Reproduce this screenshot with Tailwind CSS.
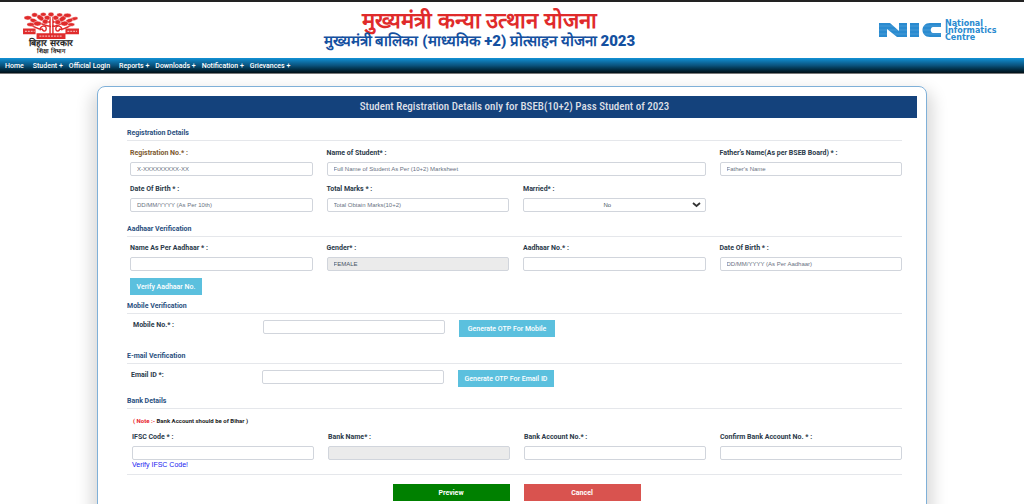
<!DOCTYPE html>
<html lang="en">
<head>
  <meta charset="UTF-8" />
  <meta name="viewport" content="width=device-width, initial-scale=1.0" />
  <title>Student Registration</title>
  <script src="https://cdn.jsdelivr.net/npm/@tailwindcss/browser@4"></script>
</head>
<body class="h-screen overflow-hidden bg-white font-['Roboto','Liberation_Sans',sans-serif] text-[7px] leading-[10px] text-[#2b3a4a]">

  <!-- Header -->
  <header class="flex h-[58px] items-start border-t-2 border-[#222] px-[22px]">
    <div class="flex w-[58px] flex-col items-center pt-[10px]">
      <svg class="h-[27px] w-[58px]" viewBox="0 0 58 28" fill="none" stroke="#e02b2b">
        <!-- branches -->
        <path stroke-width="1.500" d="M28 23V5M31 23V5M29 15C22 15 18 10 8 9M30 15C38 15 42 10 52 7M28 11C22 9 18 5 13 3M31 11C37 9 40 5 46 4M20 18c-6 0-9-4-14-5M38 18c6 0 9-3 13-5" />
        <!-- leaves -->
        <g fill="#e02b2b" stroke="#fff" stroke-width=".4">
          <ellipse cx="5" cy="6" rx="4" ry="2.200" /><ellipse cx="11" cy="9" rx="4" ry="2.200" transform="rotate(20 11 9)" />
          <ellipse cx="12" cy="3" rx="3" ry="2.200" /><ellipse cx="18" cy="6" rx="4" ry="2.500" transform="rotate(35 18 6)" />
          <ellipse cx="21" cy="2.500" rx="3" ry="2" /><ellipse cx="25" cy="6" rx="3" ry="2.500" />
          <ellipse cx="29" cy="2.500" rx="3" ry="2.300" /><ellipse cx="34" cy="6" rx="3" ry="2.500" />
          <ellipse cx="38" cy="3" rx="3" ry="2" /><ellipse cx="41" cy="7" rx="4" ry="2.500" transform="rotate(-35 41 7)" />
          <ellipse cx="46" cy="3.500" rx="4" ry="2.200" /><ellipse cx="53" cy="7" rx="4" ry="1.800" transform="rotate(-10 53 7)" />
          <ellipse cx="48" cy="9" rx="4" ry="2.200" transform="rotate(-20 48 9)" /><ellipse cx="8" cy="13" rx="4" ry="2" />
          <ellipse cx="15" cy="12" rx="4" ry="2.500" /><ellipse cx="23" cy="10" rx="3" ry="2.500" />
          <ellipse cx="36" cy="10.500" rx="3" ry="2.500" /><ellipse cx="43" cy="12" rx="4" ry="2.500" />
          <ellipse cx="50" cy="13" rx="3.500" ry="1.800" />
        </g>
        <path stroke-width="1.500" d="M18 19c-1-5 6-6 6-2s-4 3-4 0M40 19c1-5-6-6-6-2s4 3 4 0" />
        <!-- plinth and side panels -->
        <path fill="#e02b2b" stroke="none" d="M0 17h13v6H0zM44 17h14v6H44zM14 22h30v6H14z" />
        <path stroke="#fff" stroke-width=".8" stroke-dasharray="2 1" d="M2 20h10M46 20h10M17 25h24" />
      </svg>
      <p class="text-[9px] leading-[9px] font-semibold whitespace-nowrap text-[#222]">बिहार सरकार</p>
      <p class="text-[6px] leading-[6px] font-semibold whitespace-nowrap text-[#222]">शिक्षा विभाग</p>
    </div>
    <div class="flex-1 pt-[7px] text-center font-black">
      <h1 class="text-[22px] leading-[24px] text-[#e02b2b]">मुख्यमंत्री कन्या उत्थान योजना</h1>
      <h2 class="text-[15px] leading-[16px] text-[#1450a0]">मुख्यमंत्री बालिका (माध्यमिक +2) प्रोत्साहन योजना 2023</h2>
    </div>
    <div class="flex gap-1 pt-[18px] text-[#2a8bd0]">
      <svg class="mt-[2px] h-[15px] w-[62px]" viewBox="0 0 62 15">
        <path fill="#2a8bd0" d="M0 15V1h11l9 8V1h8v14H18L8 7v8zM31 1h9v14h-9zM62 1v4H54c-3 0-3 6 0 6h8v4H51c-10 0-10-14 0-14z" />
        <path stroke="#fff" stroke-opacity=".3" stroke-width=".5" d="M0 4h62M0 8h62M0 12h62" />
      </svg>
      <p class="w-[57px] font-['DejaVu_Sans',sans-serif] text-[8px] leading-[7px] font-bold">National<br />Informatics<br />Centre</p>
    </div>
  </header>

  <!-- Menu -->
  <nav class="flex h-4 items-center border-b border-[#777] bg-linear-to-b from-[#1191d6] via-[#0a527c] to-[#001018] pl-[5px] text-[7px] font-medium whitespace-nowrap text-white">
    <a href="#" class="mr-[9px]">Home</a>
    <a href="#" class="mr-[6px]">Student +</a>
    <a href="#" class="mr-[9px]">Official Login</a>
    <a href="#" class="mr-[6px]">Reports +</a>
    <a href="#" class="mr-[6px]">Downloads +</a>
    <a href="#" class="mr-[6px]">Notification +</a>
    <a href="#">Grievances +</a>
  </nav>

  <!-- Form -->
  <main class="mx-[97px] mt-3 rounded-lg border border-[#7fb0d8] pt-[9px] pr-[9px] pb-8 pl-[14px] shadow-[0_10px_16px_6px_rgba(0,0,0,0.15)]">
    <h2 class="h-[22px] bg-[#14427c] text-center font-['Liberation_Sans_Narrow','Roboto_Condensed',sans-serif] text-[11px] leading-[22px] font-medium text-[#dcdfe6]">Student Registration Details only for BSEB(10+2) Pass Student of 2023</h2>

    <form class="px-[15px] pt-[10px]">
      <h3 class="h-[13px] border-b border-gray-200 font-bold text-[#2a5080]">Registration Details</h3>
      <div class="grid grid-cols-4 gap-x-[14px] gap-y-[8px] pt-[7px] pl-[3px]">
        <div>
          <label for="regNo" class="mb-1 block font-bold text-[#7d5a30]">Registration No.* :</label>
          <input id="regNo" type="text" placeholder="X-XXXXXXXXX-XX" class="block h-[14px] w-full rounded-xs border border-gray-300 px-[6px] font-['Liberation_Sans',sans-serif] text-[6px] placeholder:text-gray-500" />
        </div>
        <div class="col-span-2">
          <label for="studentName" class="mb-1 block font-bold">Name of Student* :</label>
          <input id="studentName" type="text" placeholder="Full Name of Student As Per (10+2) Marksheet" class="block h-[14px] w-full rounded-xs border border-gray-300 px-[6px] font-['Liberation_Sans',sans-serif] text-[6px] placeholder:text-gray-500" />
        </div>
        <div>
          <label for="fatherName" class="mb-1 block font-bold">Father's Name(As per BSEB Board) * :</label>
          <input id="fatherName" type="text" placeholder="Father's Name" class="block h-[14px] w-full rounded-xs border border-gray-300 px-[6px] font-['Liberation_Sans',sans-serif] text-[6px] placeholder:text-gray-500" />
        </div>
        <div>
          <label for="dob" class="mb-1 block font-bold">Date Of Birth * :</label>
          <input id="dob" type="text" placeholder="DD/MM/YYYY (As Per 10th)" class="block h-[14px] w-full rounded-xs border border-gray-300 px-[6px] font-['Liberation_Sans',sans-serif] text-[6px] placeholder:text-gray-500" />
        </div>
        <div>
          <label for="marks" class="mb-1 block font-bold">Total Marks * :</label>
          <input id="marks" type="text" placeholder="Total Obtain Marks(10+2)" class="block h-[14px] w-full rounded-xs border border-gray-300 px-[6px] font-['Liberation_Sans',sans-serif] text-[6px] placeholder:text-gray-500" />
        </div>
        <div>
          <label for="married" class="mb-1 block font-bold">Married* :</label>
          <div class="relative">
            <select id="married" class="block h-[14px] w-full appearance-none rounded-xs border border-gray-300 bg-white pr-[20px] pl-[6px] text-center font-['Liberation_Sans',sans-serif] text-[6px] text-gray-600">
              <option>No</option>
              <option>Yes</option>
            </select>
            <svg class="pointer-events-none absolute top-1 right-[5px] h-[6px] w-[9px]" viewBox="0 0 9 6" fill="none" stroke="#333" stroke-width="1.800"><path d="M1 1l3.500 3L8 1" /></svg>
          </div>
        </div>
      </div>

      <h3 class="mt-3 h-[13px] border-b border-gray-200 font-bold text-[#2a5080]">Aadhaar Verification</h3>
      <div class="grid grid-cols-4 gap-x-[14px] pt-[6px] pl-[3px]">
        <div>
          <label for="aadhaarName" class="mb-1 block font-bold">Name As Per Aadhaar * :</label>
          <input id="aadhaarName" type="text" class="block h-[14px] w-full rounded-xs border border-gray-300 px-[6px] text-[6px]" />
        </div>
        <div>
          <label for="gender" class="mb-1 block font-bold">Gender* :</label>
          <input id="gender" type="text" value="FEMALE" readonly class="block h-[14px] w-full rounded-xs border border-gray-300 bg-[#ebebeb] px-[6px] font-['Liberation_Sans',sans-serif] text-[6px] text-gray-600" />
        </div>
        <div>
          <label for="aadhaarNo" class="mb-1 block font-bold">Aadhaar No.* :</label>
          <input id="aadhaarNo" type="text" class="block h-[14px] w-full rounded-xs border border-gray-300 px-[6px] text-[6px]" />
        </div>
        <div>
          <label for="aadhaarDob" class="mb-1 block font-bold">Date Of Birth * :</label>
          <input id="aadhaarDob" type="text" placeholder="DD/MM/YYYY (As Per Aadhaar)" class="block h-[14px] w-full rounded-xs border border-gray-300 px-[6px] font-['Liberation_Sans',sans-serif] text-[6px] placeholder:text-gray-500" />
        </div>
      </div>
      <button type="button" class="mt-[7px] ml-[3px] block h-[17px] w-[72px] bg-[#5bc0de] font-medium text-white">Verify Aadhaar No.</button>

      <h3 class="mt-[6px] h-[13px] border-b border-gray-200 font-bold text-[#2a5080]">Mobile Verification</h3>
      <div class="flex items-start pt-[6px] pl-[6px]">
        <label for="mobile" class="w-[130px] font-bold">Mobile No.* :</label>
        <input id="mobile" type="text" class="block h-[14px] w-[182px] rounded-xs border border-gray-300 px-[6px] text-[6px]" />
        <button type="button" class="ml-[14px] h-[17px] w-[96px] bg-[#5bc0de] font-medium text-white">Generate OTP For Mobile</button>
      </div>

      <h3 class="mt-[14px] h-[13px] border-b border-gray-200 font-bold text-[#2a5080]">E-mail Verification</h3>
      <div class="flex items-start pt-[6px] pl-[4px]">
        <label for="email" class="w-[131px] font-bold">Email ID *:</label>
        <input id="email" type="text" class="block h-[14px] w-[182px] rounded-xs border border-gray-300 px-[6px] text-[6px]" />
        <button type="button" class="ml-[14px] h-[17px] w-[96px] bg-[#5bc0de] font-medium text-white">Generate OTP For Email ID</button>
      </div>

      <h3 class="mt-[9px] h-[13px] border-b border-gray-200 font-bold text-[#2a5080]">Bank Details</h3>
      <div class="border-b border-gray-200 pt-[7px] pb-1 pl-[5px]">
        <p class="pl-[1px] text-[6px] font-bold text-[#222]"><span class="text-[#e8202a]">( Note :-</span> Bank Account should be of Bihar )</p>
        <div class="grid grid-cols-4 gap-x-[14px] pt-[6px]">
          <div>
            <label for="ifsc" class="mb-1 block font-bold">IFSC Code * :</label>
            <input id="ifsc" type="text" class="block h-[14px] w-full rounded-xs border border-gray-300 px-[6px] text-[6px]" />
            <a href="#" class="block font-['Liberation_Sans',sans-serif] text-[7px] text-[#2020f0]">Verify IFSC Code!</a>
          </div>
          <div>
            <label for="bankName" class="mb-1 block font-bold">Bank Name* :</label>
            <input id="bankName" type="text" readonly class="block h-[14px] w-full rounded-xs border border-gray-300 bg-[#ebebeb] px-[6px] text-[6px]" />
          </div>
          <div>
            <label for="account" class="mb-1 block font-bold">Bank Account No.* :</label>
            <input id="account" type="text" class="block h-[14px] w-full rounded-xs border border-gray-300 px-[6px] text-[6px]" />
          </div>
          <div>
            <label for="accountConfirm" class="mb-1 block font-bold">Confirm Bank Account No. * :</label>
            <input id="accountConfirm" type="text" class="block h-[14px] w-full rounded-xs border border-gray-300 px-[6px] text-[6px]" />
          </div>
        </div>
      </div>

      <div class="flex justify-center gap-[14px] pt-[9px] pl-1">
        <button type="submit" class="h-[17px] w-[117px] bg-[#008000] font-bold text-white">Preview</button>
        <button type="reset" class="h-[17px] w-[117px] bg-[#d9534f] font-bold text-white">Cancel</button>
      </div>
    </form>
  </main>

</body>
</html>
